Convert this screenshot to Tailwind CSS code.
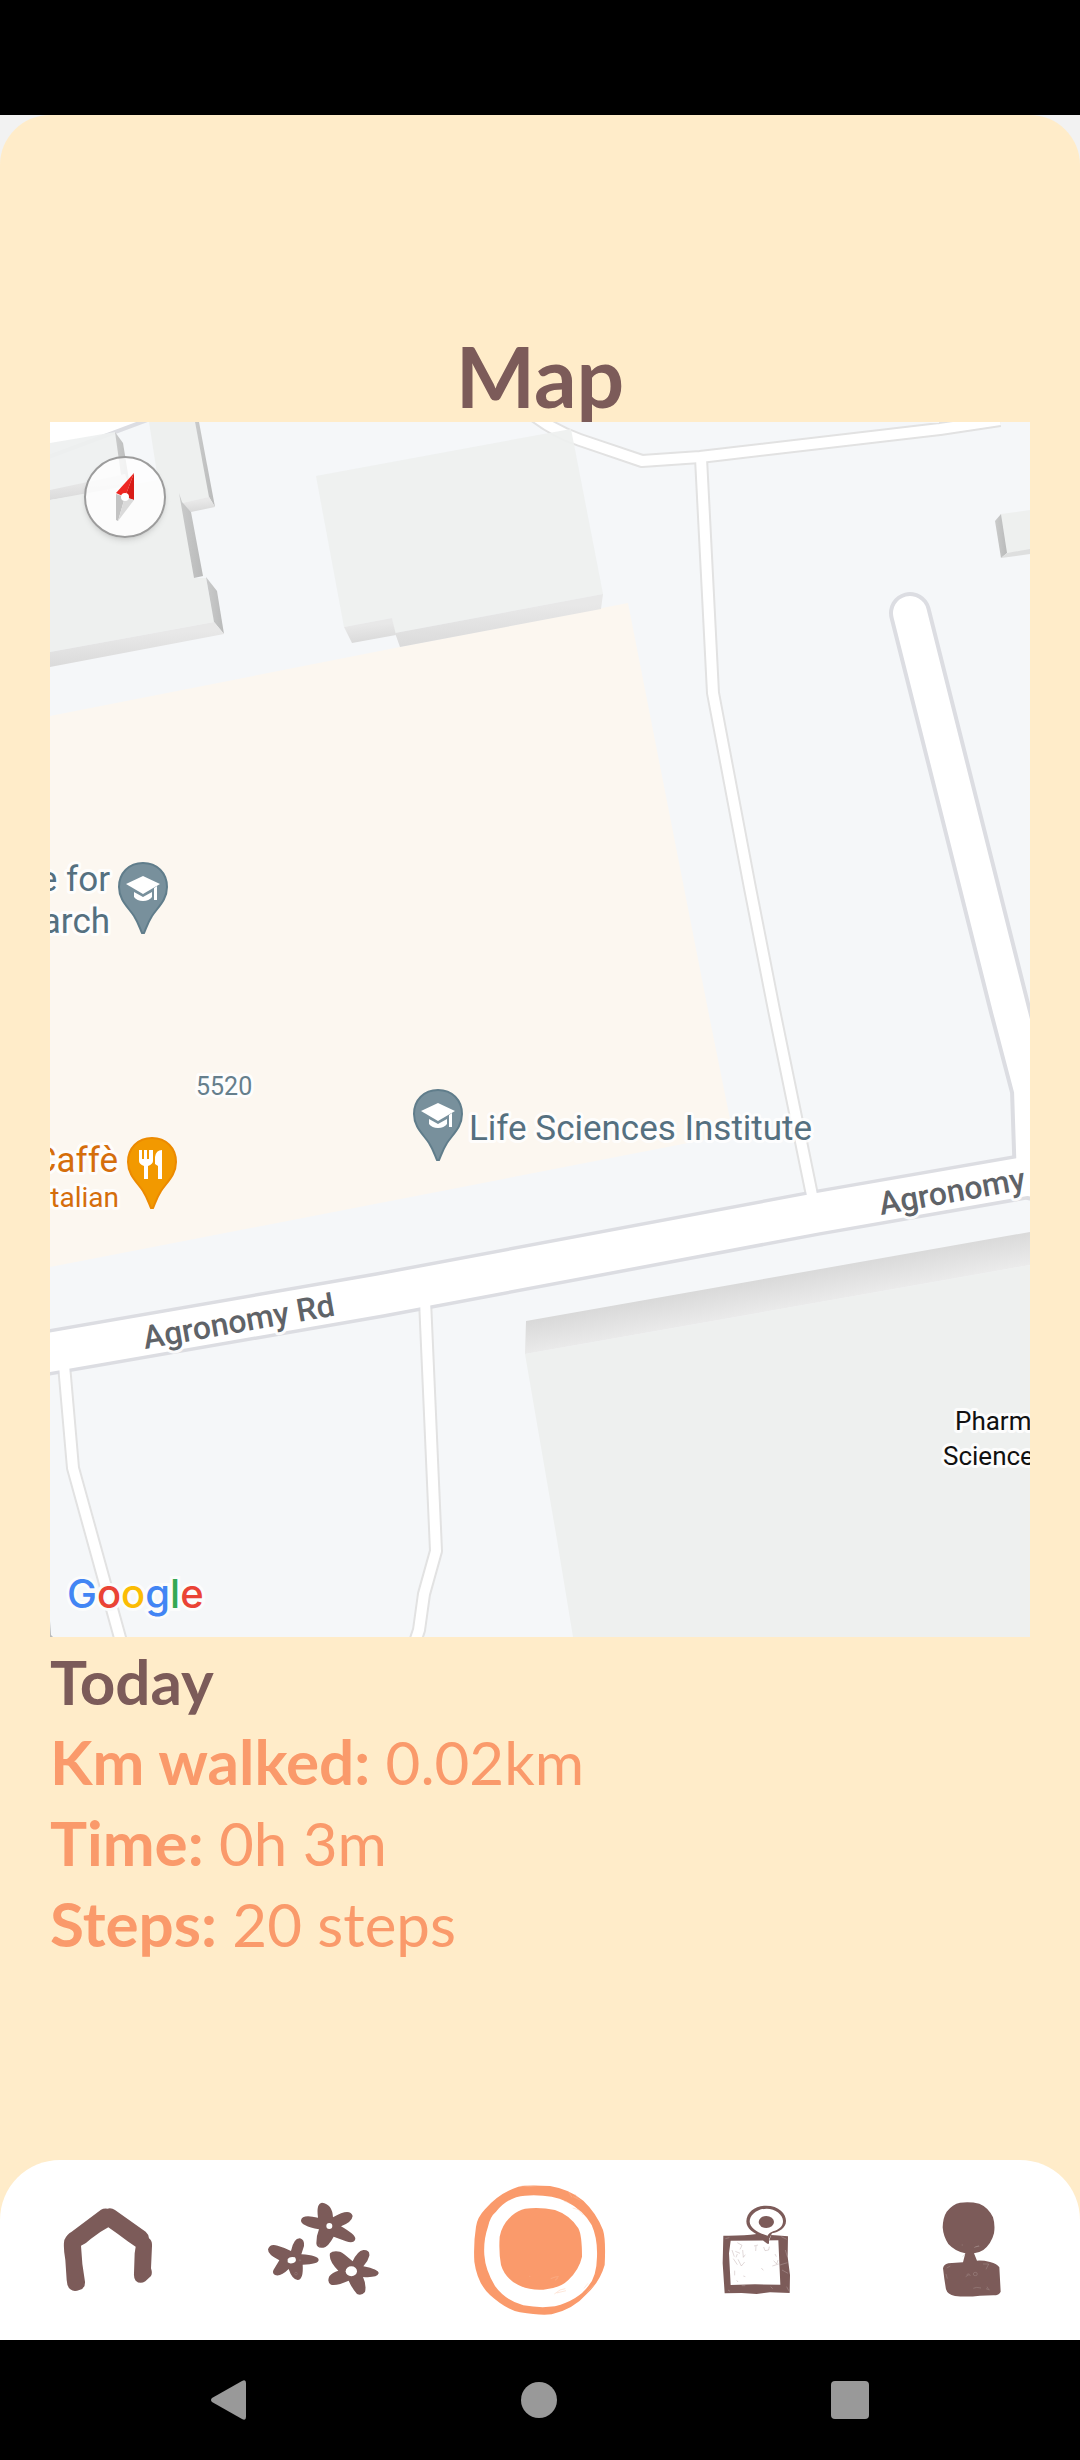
<!DOCTYPE html>
<html lang="en">
<head>
<meta charset="utf-8">
<meta name="viewport" content="width=device-width, initial-scale=1">
<title>Map</title>
<script src="https://cdn.jsdelivr.net/npm/@tailwindcss/browser@4"></script>
</head>
<body class="flex min-h-screen flex-col bg-black font-['Lato',sans-serif]">
<div class="h-[115px] shrink-0 bg-black"></div>

<div class="flex flex-1 flex-col bg-[#f2f2f2]">
<div class="flex flex-1 flex-col rounded-t-[50px] bg-[#ffecc9]">
<main class="flex-1 px-[50px] pt-[215px]">
  <h1 class="text-center text-[84px] leading-[92px] font-bold text-[#7c5b59]">Map</h1>

  <section class="relative overflow-hidden" aria-label="Map of Agronomy Road">
    <svg class="block w-full" viewBox="50 422 980 1215" font-family="Roboto, sans-serif">
      <defs>
        <linearGradient id="wall" x1="0" y1="0" x2="0.18" y2="1"><stop offset="0.35" stop-color="#e8e8e8"/><stop offset="1" stop-color="#dadada"/></linearGradient>
        <linearGradient id="side" x1="0" y1="0" x2="1" y2="0"><stop offset="0" stop-color="#cacbcb"/><stop offset="1" stop-color="#b9baba"/></linearGradient>
        <linearGradient id="north" gradientUnits="userSpaceOnUse" x1="778" y1="1276" x2="784" y2="1309"><stop offset="0" stop-color="#d9d9d9"/><stop offset="1" stop-color="#ebebeb"/></linearGradient>
        <g id="pin"><path stroke-width="2" d="M0-24C14-24 24-14 24 0C24 13 15 20 9 29C4 37 3 42 1 46H-1C-3 42-4 37-9 29C-15 20-24 13-24 0C-24-14-14-24 0-24Z"/></g>
        <g id="cap" fill="#fff"><path d="M-17-3L0-11L17-3L0 7Z"/><path d="M-9 5L0 10L9 5V10Q6 14 0 14T-9 10Z"/><path d="M11 1L14-1V13H11Z"/></g>
      </defs>
      <rect x="50" y="422" width="980" height="1215" fill="#f5f7f9"/>
      <path fill="#fff" d="M50 422H143L50 456Z"/>
      <path stroke="#dcdde2" stroke-width="4" d="M40 460L150 419"/>
      <path fill="#fcf7f0" d="M50 716L400 647L628 603L708 1010L733 1134L688 1143L380 1203L50 1267Z"/>

      <!-- footpaths and roads -->
      <g fill="none" stroke-linejoin="round">
        <g stroke="#e2e2e2" stroke-width="14">
          <path id="p1" d="M520 403Q545 428 580 440L642 461L700 457L940 429L1000 420"/>
          <path id="p2" d="M701 458L713 693L750 888L774 1010L813 1200"/>
          <path id="p3" d="M64 1365L73 1468L122 1645"/>
          <path id="p4" d="M425 1300L436 1551L424 1594L419 1630L414 1645"/>
        </g>
        <g stroke="#dcdde2">
          <path stroke-width="42" stroke-linecap="round" d="M910 613L1010 1010L1031 1090L1034 1180"/>
          <path stroke-width="46" d="M40 1354L380 1295L816 1213L1040 1174"/>
        </g>
        <g stroke="#fff">
          <path stroke-width="34" stroke-linecap="round" d="M910 613L1010 1010L1031 1090L1034 1180"/>
          <path stroke-width="39" d="M40 1354L380 1295L816 1213L1040 1174"/>
          <path stroke-width="10" d="M520 403Q545 428 580 440L642 461L700 457L940 429L1000 420"/>
          <path stroke-width="10" d="M701 458L713 693L750 888L774 1010L813 1200"/>
          <path stroke-width="10" d="M64 1365L73 1468L122 1645"/>
          <path stroke-width="10" d="M425 1300L436 1551L424 1594L419 1630L414 1645"/>
        </g>
      </g>

      <!-- buildings -->
      <path fill="#eef0f0" fill-opacity=".92" d="M50 443L115 432L123 456L129 479L50 497Z"/>
      <path fill="url(#side)" d="M115 432L123 443L129 480L122 482Z"/>
      <path fill="url(#wall)" d="M50 490L125 474L130 488L50 500Z"/>
      <path fill="#eef0ef" d="M50 500L158 480L149 422H195L210 497L182 503L194 578H206L214 622L50 652Z"/>
      <path fill="url(#side)" d="M195 422H199L215 507L209 497Z"/>
      <path fill="url(#wall)" d="M182 503L209 497L215 507L191 512Z"/>
      <path fill="url(#side)" d="M179 493L182 502L191 512L203 576L194 578Z"/>
      <path fill="url(#side)" d="M206 577L217 591L224 634L214 622Z"/>
      <path fill="url(#wall)" d="M50 652L214 622L224 634L50 667Z"/>
      <path fill="#eef0ef" fill-opacity=".92" d="M316 476L571 429L603 594L395 633L392 618L344 627Z"/>
      <path fill="url(#wall)" d="M344 627L392 618L396 635L352 643Z"/>
      <path fill="url(#wall)" d="M395 633L603 594L601 609L400 647Z"/>
      <path fill="#eef0ef" d="M1001 514L1030 510V550L1006 553Z"/>
      <path fill="url(#side)" d="M995 521L1001 514L1007 553L1001 558Z"/>
      <path fill="#dedfdf" d="M1007 553L1030 549V554L1001 558Z"/>
      <path fill="#eef0ef" d="M525 1354L1030 1265V1637H573L557 1540Z"/>
      <path fill="url(#north)" d="M526 1321L1030 1232V1265L525 1354Z"/>
      <path fill="#b9baba" d="M50 1621L51 1635L53 1637H50Z"/>

      <!-- labels -->
      <g stroke="#fff" stroke-opacity=".85" stroke-width="6" stroke-linejoin="round" paint-order="stroke">
        <g fill="#557080" font-size="35">
          <text x="110" y="891" text-anchor="end">Centre for</text>
          <text x="110" y="933" text-anchor="end">Research</text>
          <text x="469" y="1140">Life Sciences Institute</text>
          <text x="196" y="1095" font-size="25" fill="#667f8c">5520</text>
        </g>
        <g fill="#d56e0c" text-anchor="end">
          <text x="118" y="1172" font-size="35">Caffè</text>
          <text x="119" y="1207" font-size="28">Italian</text>
        </g>
        <g fill="#5f6368" font-size="32" font-weight="500">
          <text transform="translate(145 1349) rotate(-10)">Agronomy Rd</text>
          <text transform="translate(881 1215) rotate(-10)">Agronomy</text>
        </g>
        <g fill="#111" font-size="26">
          <text x="955" y="1430">Pharm</text>
          <text x="943" y="1465">Sciences</text>
        </g>
      </g>

      <g fill="#78909c" stroke="#607d8b">
        <g transform="translate(143 887)"><use href="#pin"/><use href="#cap" stroke="none"/></g>
        <g transform="translate(438 1114)"><use href="#pin"/><use href="#cap" stroke="none"/></g>
      </g>
      <g transform="translate(152 1162)">
        <use href="#pin" fill="#f29900" stroke="#ec8a00"/>
        <path fill="#fff" d="M-13-12H-10V-3H-8V-12H-5V-3H-3V-12H1V-1Q1 2-4 4V17H-8V4Q-13 2-13-1ZM10-12V17H6V4L3 2V-5Q4-12 10-12Z"/>
      </g>
    </svg>

    <button type="button" aria-label="Reset compass" class="absolute top-[34px] left-[34px] size-[82px] rounded-full border-2 border-[#9c9c9c] bg-white/80 shadow-md">
      <svg class="block size-full" viewBox="-39 -39 78 78">
        <path fill="#ee2722" d="M9-24L-9-4L0 0Z"/><path fill="#d81b16" d="M9-24L0 0L9 3Z"/>
        <path fill="#c3c3c3" d="M-9-3L0 0L-7 24L-9 23Z"/><path fill="#dadada" d="M9 3L0 0L-7 24Z"/>
        <circle r="4" fill="#fff"/>
      </svg>
    </button>
    <a href="#" aria-label="Google" class="absolute bottom-[15px] left-[17px] font-['Inter',sans-serif] text-[40px] leading-[56px] font-medium [paint-order:stroke] [-webkit-text-stroke:6px_#fbfcfc]"><span class="text-[#4285f4]">G</span><span class="text-[#ea4335]">o</span><span class="text-[#fbbc04]">o</span><span class="text-[#4285f4]">g</span><span class="text-[#34a853]">l</span><span class="text-[#ea4335]">e</span></a>
  </section>

  <section class="pt-1 text-[60px] leading-[80px] text-[#fa9a6b]">
    <h2 class="text-[62px] font-bold text-[#7c5b59]">Today</h2>
    <p><b class="text-[62px]">Km walked:</b> 0.02km</p>
    <p><b class="text-[62px]">Time:</b> 0h 3m</p>
    <p><b class="text-[62px]">Steps:</b> 20 steps</p>
  </section>
</main>

<nav aria-label="Main" class="grid h-[180px] shrink-0 grid-cols-5 rounded-t-[60px] bg-white">
  <a href="#" aria-label="Home" class="flex justify-center">
    <svg class="h-[180px] w-[216px]" viewBox="0 60 648 540" fill="#7c5b59"><path d="M303 209Q310 205 322 206Q335 203 345 210L437 275Q447 284 447 295Q457 302 456 318L453 385Q458 400 453 408L436 424Q420 434 407 422Q401 415 402 400L404 340L407 320L385 305Q355 283 325 262Q300 275 272 297Q257 312 243 317Q245 370 255 425Q256 446 238 450Q222 457 211 448Q201 440 200 420L196 360Q189 320 193 300Q200 283 215 275Z"/></svg>
  </a>
  <a href="#" aria-label="Flowers" class="flex justify-center">
    <svg class="h-[180px] w-[216px]" viewBox="648 60 648 540" fill="#7c5b59">
      <path d="M954 233Q948 190 966 188Q997 192 999 232Q1050 202 1058 228Q1056 246 1023 259Q1067 284 1066 297Q1062 312 1038 304Q1018 296 1001 290Q985 320 970 323Q950 326 949 310Q948 290 957 268Q902 258 903 241Q906 221 954 233Z"/>
      <path d="M873 333Q881 294 900 295Q914 299 912 318L904 343Q955 346 956 360Q955 373 908 374Q911 418 893 420Q876 418 866 387Q842 411 825 405Q813 398 824 384L838 361Q803 344 804 328Q810 309 833 317Q855 323 873 333Z"/>
      <path d="M1058 364Q1072 333 1090 330Q1110 329 1108 347Q1104 364 1090 379Q1136 388 1136 400Q1132 414 1089 411Q1100 434 1095 456Q1085 468 1071 462Q1056 445 1046 422Q1011 438 993 434Q980 426 988 409Q997 397 1015 392Q985 362 990 340Q998 331 1020 335Q1030 339 1058 364Z"/>
      <g fill="#fff"><ellipse cx="988" cy="258" rx="9" ry="9"/><path d="M863 357Q870 348 885 352Q892 364 882 368Q870 373 863 367Z"/><ellipse cx="1054" cy="394" rx="17" ry="15"/></g>
      <g fill="none" stroke="#a58d8b" stroke-width="1"><circle cx="888" cy="401" r="4"/><circle cx="900" cy="361" r="2"/><path d="M958 312V322"/></g>
    </svg>
  </a>
  <a href="#" aria-label="Record walk" class="flex justify-center">
    <svg class="h-[180px] w-[216px]" viewBox="-24 30 648 540">
      <path fill="#fa9a6b" fill-rule="evenodd" d="M235 110Q260 104 330 108Q390 118 430 152Q470 190 489 240Q498 270 494 345Q480 395 440 432Q400 478 335 493Q300 497 240 487Q200 480 150 435Q112 400 103 335Q100 280 108 230Q112 202 135 178Q175 130 235 110ZM255 137Q205 140 168 185Q150 200 144 230Q130 270 133 315Q136 360 165 408Q195 450 250 466Q300 475 345 469Q415 450 445 408Q470 380 471 320Q473 265 455 225Q430 180 380 155Q330 132 255 137Z"/>
      <path fill="#fa9a6b" d="M255 176Q300 170 345 180Q390 195 415 235Q426 255 426 320Q418 358 385 390Q360 415 310 419Q270 422 235 405Q195 385 183 345Q176 310 179 260Q185 225 215 197Q235 180 255 176Z"/>
      <g fill="none" stroke="#fcc7ac" stroke-width="1"><path d="M384 122L396 142M400 140L422 151M405 132L412 144M332 386L346 381L356 380M345 391L354 383M432 415L444 400M440 428L462 404M268 379H271M245 107L268 110L290 107"/></g>
      <g fill="none" stroke="#fbb592" stroke-width="1"><path d="M343 432L360 420L376 416M350 429L378 422M372 153L390 160M398 174L415 179L430 195"/></g>
    </svg>
  </a>
  <a href="#" aria-label="Map" aria-current="page" class="flex justify-center">
    <svg class="h-[180px] w-[216px]" viewBox="-156 60 648 540" fill="#7c5b59">
      <path fill-rule="evenodd" d="M70 287Q130 288 170 282L225 286L264 289L263 350L270 405L269 459L210 457L170 462L125 459L74 460L68 370ZM92 302L87 340L92 435L165 433L241 434L235 301Z"/>
      <path fill="#fff" d="M198 198C236 198 258 222 258 244C258 262 238 276 216 279L208 300L190 289C160 278 139 266 139 244C139 216 166 198 198 198Z"/>
      <path fill-rule="evenodd" d="M198 197C238 197 259 222 258 244C258 264 236 277 216 280L207 298V311H202L190 302L188 291C160 280 139 266 139 244C140 216 166 197 198 197ZM200 206C170 206 149 226 149 245C150 264 175 279 203 287C208 277 215 275 225 272C240 266 249 258 249 243C249 224 226 206 200 206Z"/>
      <ellipse cx="199" cy="246" rx="23" ry="18"/>
      <g fill="none" stroke="#a58d8b" stroke-width="1"><path d="M162 318L174 315M168 318L167 333M191 321L195 332L206 330L208 320M112 308L126 316L120 328M106 334L120 340M128 330L130 352L136 344M100 356L112 374M114 358L124 378L134 366M112 342L108 352M221 362L230 372L234 360M217 378L236 372M104 392V406M110 421L114 426M184 384L190 391M130 408L136 410M96 330L103 350M225 342L229 350"/></g>
      <g fill="none" stroke="#cdbfbe" stroke-width="1"><path d="M240 375L262 368M246 390L264 400M256 330L262 350M244 290L260 298M76 296L88 293M212 440L218 446M260 440L266 452M84 450L90 454M125 437H136"/></g>
    </svg>
  </a>
  <a href="#" aria-label="Profile" class="flex justify-center">
    <svg class="h-[180px] w-[216px]" viewBox="492 60 648 540" fill="#7c5b59">
      <path d="M780 188Q810 184 838 191Q865 202 879 232Q886 255 882 280Q874 312 850 330Q840 337 822 340L831 362Q850 361 870 366Q892 372 898 382L902 455Q898 466 880 466L840 467Q800 472 765 468Q742 463 738 448Q733 420 729 385Q731 373 745 370L789 367L796 340Q765 334 745 312Q730 290 728 262Q729 232 740 215Q758 192 780 188Z"/>
      <g fill="none" stroke="#b7a3a2" stroke-width="1"><ellipse cx="826" cy="402" rx="6" ry="5"/><path d="M797 410L808 403L811 408M800 404L806 401M820 445L830 442L843 444M858 446L869 450M861 440L866 448M849 372H866L858 388M740 384L751 378M822 323L837 317M785 315H789M738 402L742 416M826 320L838 319M788 350L795 342"/></g>
    </svg>
  </a>
</nav>
</div>
</div>

<div class="flex h-[120px] shrink-0 items-center justify-between bg-black px-[211px]">
  <button type="button" aria-label="Back"><svg class="block" width="36" height="40" viewBox="0 0 36 40"><path fill="#999" d="M31 1Q35-1 35 3V37Q35 41 31 39L1 22Q-1 20 1 18Z"/></svg></button>
  <button type="button" aria-label="Home screen" class="size-9 rounded-full bg-[#999]"></button>
  <button type="button" aria-label="Recent apps" class="size-[38px] rounded-sm bg-[#999]"></button>
</div>
</body>
</html>
